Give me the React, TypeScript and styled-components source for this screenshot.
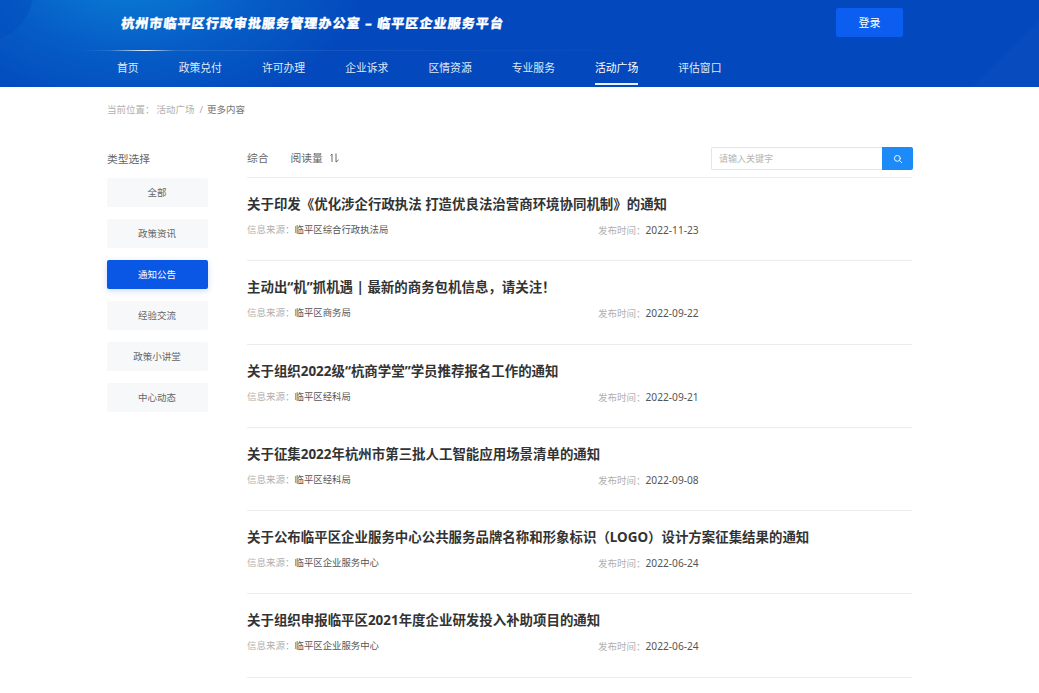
import styled, { createGlobalStyle } from "styled-components";

const GlobalStyle = createGlobalStyle`
    html, body {
        margin: 0;
        padding: 0;
        background: #fff;
        font-family: "Noto Sans", "Noto Sans CJK SC", sans-serif;
    }
    * { box-sizing: border-box; }
`

const Header = styled.header`
    position: relative;
    height: 87px;
    overflow: hidden;
    background: #0349bd;
`

const HeaderGlow = styled.div`
    position: absolute;
    left: -110px;
    top: -190px;
    width: 480px;
    height: 310px;
    border-radius: 50%;
    background: radial-gradient(closest-side, #0a84d8 0%, rgba(8, 104, 204, 0.65) 55%, rgba(4, 73, 189, 0) 100%);
`

const HeaderArc = styled.div`
    position: absolute;
    left: -84px;
    top: -66px;
    width: 118px;
    height: 110px;
    border-radius: 50%;
    background: rgba(3, 73, 189, 0.35);
`

const HeaderStreak = styled.div`
    position: absolute;
    right: -21px;
    top: 0;
    width: 180px;
    height: 180px;
    background: linear-gradient(135deg, rgba(255, 255, 255, 0) 50%, rgba(255, 255, 255, 0.015) 50%);
`

const TopRow = styled.div`
    position: relative;
    height: 50px;
    padding-left: 121px;
    padding-right: 136px;
    display: flex;
    align-items: center;
    justify-content: space-between;
`

const SiteTitle = styled.h1`
    margin: 0;
    padding-bottom: 5px;
    color: #fff;
    font-size: 13px;
    font-weight: 900;
    letter-spacing: 1.09px;
    white-space: nowrap;
    transform: skewX(-7deg);
    -webkit-text-stroke: 0.3px #fff;
`

const LoginButton = styled.button`
    width: 67px;
    height: 29px;
    margin-bottom: 6px;
    border: 0;
    border-radius: 2px;
    background: #0b5eef;
    color: #fff;
    font: inherit;
    font-size: 11px;
`

const Divider = styled.div`
    position: relative;
    height: 1px;
    background: linear-gradient(90deg, rgba(255,255,255,0) 80px, rgba(255,255,255,0.12) 110px, rgba(255,255,255,0.9) 145px, rgba(255,255,255,0.12) 175px, rgba(255,255,255,0.05) 400px, rgba(255,255,255,0) 700px);
`

const Nav = styled.nav`
    position: relative;
    display: flex;
    gap: 40px;
    padding-left: 117px;
    height: 36px;
`

const NavItem = styled.a<{ $active?: boolean }>`
    display: block;
    height: 34px;
    padding-top: 9px;
    color: #fff;
    opacity: ${({ $active }) => ($active ? 1 : 0.88)};
    font-size: 10.82px;
    line-height: 16px;
    white-space: nowrap;
    border-bottom: 2px solid ${({ $active }) => ($active ? "#e8f0ff" : "transparent")};
`

const Breadcrumb = styled.div`
    display: flex;
    height: 47px;
    padding: 15px 0 0 107px;
    font-size: 9.5px;
    line-height: 16px;
    color: #a8a8a8;
`

const Crumb = styled.span<{ $dark?: boolean }>`
    margin-right: ${({ $dark }) => ($dark ? 0 : "2px")};
    color: ${({ $dark }) => ($dark ? "#777" : "#b0b0b0")};
`

const Slash = styled.span`
    margin: 0 4px 0 3px;
    color: #aaa;
`

const Body = styled.div`
    display: flex;
    padding: 13px 127px 0 107px;
`

const Sidebar = styled.aside`
    width: 101px;
    margin-right: 39px;
    flex-shrink: 0;
`

const SidebarTitle = styled.div`
    height: 31px;
    padding-top: 4px;
    font-size: 10.75px;
    line-height: 16px;
    color: #666;
`

const SideList = styled.div`
    display: flex;
    flex-direction: column;
    gap: 12px;
`

const SideItem = styled.div<{ $active?: boolean }>`
    height: 29px;
    display: flex;
    align-items: center;
    justify-content: center;
    padding: 0 1px 2px 0;
    border-radius: 2px;
    font-size: 9.5px;
    color: ${({ $active }) => ($active ? "#fff" : "#666")};
    background: ${({ $active }) => ($active ? "#0a57e6" : "#f7f8fa")};
    box-shadow: ${({ $active }) => ($active ? "0 2px 6px rgba(10, 87, 230, 0.2)" : "none")};
`

const Main = styled.main`
    flex: 1;
    min-width: 0;
`

const Toolbar = styled.div`
    height: 31px;
    display: flex;
    align-items: flex-start;
    border-bottom: 1px solid #ececec;
    font-size: 10.75px;
    line-height: 22px;
    color: #666;
`

const Sort = styled.span`
    display: flex;
    align-items: center;
    margin-right: 22px;
    white-space: nowrap;
`

const SortMark = styled.span`
    display: flex;
    align-items: center;
    margin-left: 6px;
`

const SearchBox = styled.div`
    display: flex;
    height: 23px;
    width: 202px;
    margin-left: auto;
    margin-right: -1px;
`

const SearchInput = styled.div`
    flex: 1;
    border: 1px solid #e4e6ea;
    border-right: 0;
    border-radius: 2px 0 0 2px;
    padding-left: 7px;
    font-size: 9px;
    line-height: 21px;
    color: #b4b4b4;
`

const SearchButton = styled.div`
    width: 31px;
    display: flex;
    align-items: center;
    justify-content: center;
    background: #1c8bf8;
    border-radius: 0 2px 2px 0;
`

const Article = styled.article`
    height: 83.3px;
    padding-top: 14px;
    border-bottom: 1px solid #ececec;
`

const ArticleTitle = styled.h3`
    margin: 0;
    height: 24px;
    font-size: 13.45px;
    line-height: 24px;
    font-weight: 700;
    color: #333;
    white-space: nowrap;
`

const Meta = styled.div`
    display: flex;
    margin-top: 6px;
    font-size: 9.5px;
    line-height: 16px;
`

const MetaCol = styled.div<{ $wide?: boolean }>`
    width: ${({ $wide }) => ($wide ? "351px" : "auto")};
    color: #b0b0b0;
`

const MetaValue = styled.span<{ $date?: boolean }>`
    color: #555;
    font-size: ${({ $date }) => ($date ? "10.2px" : "9.4px")};
`

const articles = [
    { title: "关于印发《优化涉企行政执法 打造优良法治营商环境协同机制》的通知", source: "临平区综合行政执法局", date: "2022-11-23" },
    { title: "主动出“机”抓机遇 | 最新的商务包机信息，请关注！", source: "临平区商务局", date: "2022-09-22" },
    { title: "关于组织2022级“杭商学堂”学员推荐报名工作的通知", source: "临平区经科局", date: "2022-09-21" },
    { title: "关于征集2022年杭州市第三批人工智能应用场景清单的通知", source: "临平区经科局", date: "2022-09-08" },
    { title: "关于公布临平区企业服务中心公共服务品牌名称和形象标识（LOGO）设计方案征集结果的通知", source: "临平区企业服务中心", date: "2022-06-24" },
    { title: "关于组织申报临平区2021年度企业研发投入补助项目的通知", source: "临平区企业服务中心", date: "2022-06-24" },
]

const navItems = ["首页", "政策兑付", "许可办理", "企业诉求", "区情资源", "专业服务", "活动广场", "评估窗口"]
const sideItems = ["全部", "政策资讯", "通知公告", "经验交流", "政策小讲堂", "中心动态"]

const App = () => {
    return (
        <>
            <GlobalStyle />
            <Header>
                <HeaderGlow />
                <HeaderArc />
                <HeaderStreak />
                <TopRow>
                    <SiteTitle>杭州市临平区行政审批服务管理办公室 – 临平区企业服务平台</SiteTitle>
                    <LoginButton>登录</LoginButton>
                </TopRow>
                <Divider />
                <Nav>
                    {navItems.map((item) => (
                        <NavItem key={item} $active={item === "活动广场"}>{item}</NavItem>
                    ))}
                </Nav>
            </Header>
            <Breadcrumb>
                <Crumb>当前位置：</Crumb>
                <Crumb>活动广场</Crumb>
                <Slash>/</Slash>
                <Crumb $dark>更多内容</Crumb>
            </Breadcrumb>
            <Body>
                <Sidebar>
                    <SidebarTitle>类型选择</SidebarTitle>
                    <SideList>
                        {sideItems.map((item) => (
                            <SideItem key={item} $active={item === "通知公告"}>{item}</SideItem>
                        ))}
                    </SideList>
                </Sidebar>
                <Main>
                    <Toolbar>
                        <Sort>综合</Sort>
                        <Sort>
                            阅读量
                            <SortMark>
                                <svg width="11" height="10" viewBox="0 0 11 10" fill="none" stroke="#666" strokeWidth="1">
                                    <path d="M1.5 2.4L3 1v8" />
                                    <path d="M7 .5v8.6L9.6 6.8" />
                                </svg>
                            </SortMark>
                        </Sort>
                        <SearchBox>
                            <SearchInput>请输入关键字</SearchInput>
                            <SearchButton>
                                <svg width="10" height="10" viewBox="0 0 24 24" fill="none" stroke="#fff" strokeWidth="2.2" strokeLinecap="round">
                                    <circle cx="10.5" cy="10.5" r="7" />
                                    <path d="M16 16l5 5" />
                                </svg>
                            </SearchButton>
                        </SearchBox>
                    </Toolbar>
                    {articles.map((a) => (
                        <Article key={a.title}>
                            <ArticleTitle>{a.title}</ArticleTitle>
                            <Meta>
                                <MetaCol $wide>信息来源：<MetaValue>{a.source}</MetaValue></MetaCol>
                                <MetaCol>发布时间：<MetaValue $date>{a.date}</MetaValue></MetaCol>
                            </Meta>
                        </Article>
                    ))}
                </Main>
            </Body>
        </>
    )
}

export default App;
